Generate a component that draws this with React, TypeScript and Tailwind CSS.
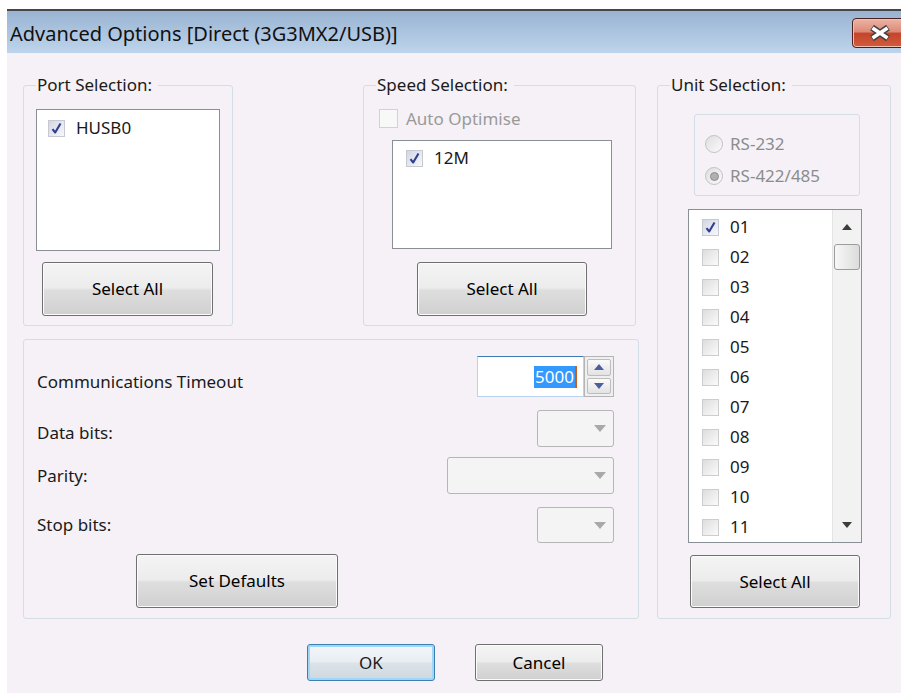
import type { ReactNode } from 'react';

function CheckBox({ checked = false, disabled = false, size = 17 }: { checked?: boolean; disabled?: boolean; size?: number }) {
  const box = size === 19 ? 'h-[19px] w-[19px]' : 'h-[17px] w-[17px]';
  const skin = disabled
    ? 'border-[#d2d2d2] bg-[#f8f8f8]'
    : checked
      ? 'border-[#c6c9d2] bg-gradient-to-br from-[#d3d7e2] to-[#f7f8fb]'
      : 'border-[#cdcdcd] bg-gradient-to-br from-[#dddddd] to-[#fbfbfb]';
  return (
    <span className={`flex shrink-0 items-center justify-center border ${box} ${skin}`}>
      {checked && (
        <svg width="13" height="13" viewBox="0 0 13 13">
          <path d="M2.5 7.2 L5.2 10.5 L10.5 1.5" stroke="#2e3f93" strokeWidth="2.1" fill="none" strokeLinejoin="round" />
        </svg>
      )}
    </span>
  );
}

function Radio({ checked = false }: { checked?: boolean }) {
  return (
    <span className="flex h-[18px] w-[18px] shrink-0 items-center justify-center rounded-full border border-[#c4c4c4] bg-gradient-to-br from-[#dedede] to-[#fbfbfb]">
      {checked && <span className="h-[9px] w-[9px] rounded-full border border-[#8f8f8f] bg-[#b0b0b0]" />}
    </span>
  );
}

function Button({ children, className = '' }: { children: ReactNode; className?: string }) {
  return (
    <div
      className={`flex items-center justify-center rounded-[3px] border border-[#707070] bg-[linear-gradient(#f4f4f4_0%,#ececec_48%,#dedede_52%,#d0d0d0_100%)] shadow-[inset_0_0_0_1px_#fbfbfb] text-black ${className}`}
    >
      {children}
    </div>
  );
}

function Combo({ className = '' }: { className?: string }) {
  return (
    <div className={`flex items-center justify-end rounded-[3px] border border-[#b6b6b6] bg-[#f4f4f4] pr-[7px] ${className}`}>
      <svg width="12" height="7" viewBox="0 0 12 7">
        <path d="M0 0 H12 L6 7 Z" fill="#a9a9a9" />
      </svg>
    </div>
  );
}

function Arrow({ up, color }: { up?: boolean; color: string }) {
  return (
    <svg width="10" height="6" viewBox="0 0 10 6">
      <path d={up ? 'M0 6 H10 L5 0 Z' : 'M0 0 H10 L5 6 Z'} fill={color} />
    </svg>
  );
}

function ListItem({ label, checked = false }: { label: string; checked?: boolean }) {
  return (
    <div className="flex h-[30px] shrink-0 items-center gap-[11px]">
      <CheckBox checked={checked} />
      <span>{label}</span>
    </div>
  );
}

function Group({ title, className = '', children }: { title: string; className?: string; children: ReactNode }) {
  return (
    <fieldset className={`m-0 min-w-0 rounded-[3px] border border-[#d3dde5] px-[12px] pb-0 pt-0 ${className}`}>
      <legend className="pl-[1px] pr-[6px] leading-[20px]">{title}</legend>
      <div className="flex flex-col items-start">{children}</div>
    </fieldset>
  );
}

const units = ['01', '02', '03', '04', '05', '06', '07', '08', '09', '10', '11'];

export default function App() {
  return (
    <div className="flex h-[693px] w-[901px] flex-col overflow-hidden bg-white pl-[7px] font-['Noto_Sans',sans-serif] text-[17px] text-[#1a1a1a]">
      <div className="h-[9px] shrink-0" />
      <div className="h-[2px] shrink-0 bg-[#464646]" />

      {/* caption bar */}
      <div className="flex h-[42px] shrink-0 items-start justify-between overflow-hidden bg-gradient-to-b from-[#99b4d2] to-[#bed4ec] pl-[3px]">
        <span className="mt-[11px] text-[20px] leading-[24px] text-[#111]">Advanced Options [Direct (3G3MX2/USB)]</span>
        <div className="mr-[-7px] mt-[7px] flex h-[30px] w-[56px] items-center justify-center rounded-[4px] border border-[#4b2020] bg-[linear-gradient(#ebb4a6_0%,#dd8a76_45%,#c5452b_52%,#d25b3c_100%)] shadow-[inset_0_0_0_1px_#f0c0b0]">
          <svg width="24" height="16" viewBox="0 0 24 16">
            <path d="M4 2.5 L20 13.5 M20 2.5 L4 13.5" stroke="#404040" strokeWidth="6.5" />
            <path d="M4.5 3 L19.5 13 M19.5 3 L4.5 13" stroke="#ffffff" strokeWidth="3.6" />
          </svg>
        </div>
      </div>

      <div className="flex flex-1 flex-col bg-[#f5f1f6] pl-[16px] pr-[10px] pt-[22px]">
        <div className="flex gap-[18px]">
          <div className="flex w-[616px] flex-col">
            <div className="flex gap-[130px]">
              <Group title="Port Selection:" className="h-[251px] w-[210px]">
                <div className="mt-[14px] flex h-[142px] w-[184px] flex-col border border-[#8a8f96] bg-white pl-[11px] pt-[3px]">
                  <ListItem label="HUSB0" checked />
                </div>
                <Button className="ml-[6px] mt-[11px] h-[54px] w-[171px]">Select All</Button>
              </Group>

              <Group title="Speed Selection:" className="h-[251px] w-[273px]">
                <div className="ml-[3px] mt-[13px] flex h-[21px] items-center gap-[8px] text-[#9a9a9a]">
                  <CheckBox disabled size={19} />
                  <span>Auto Optimise</span>
                </div>
                <div className="ml-[16px] mt-[11px] flex h-[109px] w-[220px] flex-col border border-[#8a8f96] bg-white pl-[13px] pt-[2px]">
                  <ListItem label="12M" checked />
                </div>
                <Button className="ml-[41px] mt-[13px] h-[54px] w-[170px]">Select All</Button>
              </Group>
            </div>

            <div className="mt-[13px] flex h-[280px] flex-col rounded-[3px] border border-[#d3dde5] pl-[13px] pr-[24px] pt-[16px]">
              <div className="flex h-[41px] items-center justify-between">
                <span className="pt-[10px]">Communications Timeout</span>
                <div className="flex h-[41px]">
                  <div className="flex w-[107px] items-center justify-end border border-[#b9d3ee] border-t-[#3d7cb6] bg-white pr-[6px]">
                    <span className="bg-[#3399ff] px-[1px] leading-[22px] text-white">5000</span>
                    <span className="h-[22px] w-[2px] bg-[#c8601c]" />
                  </div>
                  <div className="flex w-[30px] flex-col gap-[2px] border border-[#b5b5b5] bg-[#efefef] p-[2px]">
                    <span className="flex flex-1 items-center justify-center rounded-[2px] border border-[#bdbdbd] bg-gradient-to-b from-[#fafafa] to-[#e3e3e3]">
                      <Arrow up color="#4d5e9e" />
                    </span>
                    <span className="flex flex-1 items-center justify-center rounded-[2px] border border-[#bdbdbd] bg-gradient-to-b from-[#fafafa] to-[#e3e3e3]">
                      <Arrow color="#4d5e9e" />
                    </span>
                  </div>
                </div>
              </div>
              <div className="mt-[13px] flex h-[37px] items-center justify-between">
                <span className="pt-[8px]">Data bits:</span>
                <Combo className="h-[37px] w-[77px]" />
              </div>
              <div className="mt-[10px] flex h-[37px] items-center justify-between">
                <span>Parity:</span>
                <Combo className="h-[37px] w-[167px]" />
              </div>
              <div className="mt-[13px] flex h-[36px] items-center justify-between">
                <span>Stop bits:</span>
                <Combo className="h-[36px] w-[77px]" />
              </div>
              <Button className="ml-[99px] mt-[11px] h-[54px] w-[202px]">Set Defaults</Button>
            </div>
          </div>

          <Group title="Unit Selection:" className="h-[544px] w-[234px]">
            <div className="ml-[24px] mt-[19px] flex h-[82px] w-[166px] flex-col gap-[10px] rounded-[3px] border border-[#d3dde5] pl-[10px] pt-[18px] text-[#8c8c8c]">
              <div className="flex h-[22px] items-center gap-[7px]">
                <Radio />
                <span>RS-232</span>
              </div>
              <div className="flex h-[22px] items-center gap-[7px]">
                <Radio checked />
                <span>RS-422/485</span>
              </div>
            </div>

            <div className="ml-[18px] mt-[13px] flex h-[334px] w-[174px] border border-[#8a8f96] bg-white">
              <div className="flex flex-1 flex-col overflow-hidden pl-[13px] pt-[2px]">
                {units.map((u, i) => (
                  <ListItem key={u} label={u} checked={i === 0} />
                ))}
              </div>
              <div className="flex w-[29px] flex-col border-l border-[#e4e4e4] bg-[#f2f2f2]">
                <div className="flex h-[34px] items-center justify-center">
                  <Arrow up color="#3c3c3c" />
                </div>
                <div className="mx-[1px] h-[26px] rounded-[3px] border border-[#9c9c9c] bg-gradient-to-r from-[#f7f7f7] to-[#dcdcdc]" />
                <div className="flex-1" />
                <div className="flex h-[34px] items-center justify-center">
                  <Arrow color="#3c3c3c" />
                </div>
              </div>
            </div>

            <Button className="ml-[20px] mt-[12px] h-[53px] w-[170px]">Select All</Button>
          </Group>
        </div>

        <div className="mt-[25px] flex justify-center gap-[40px] pr-[4px]">
          <div className="flex h-[37px] w-[128px] items-center justify-center rounded-[3px] border border-[#3c7fb1] bg-[linear-gradient(#f2f6f9_0%,#e9eef2_48%,#dbe3e9_52%,#cfd8df_100%)] shadow-[inset_0_0_0_2px_#9fd5f6]">
            OK
          </div>
          <Button className="h-[37px] w-[128px]">Cancel</Button>
        </div>
      </div>
    </div>
  );
}
